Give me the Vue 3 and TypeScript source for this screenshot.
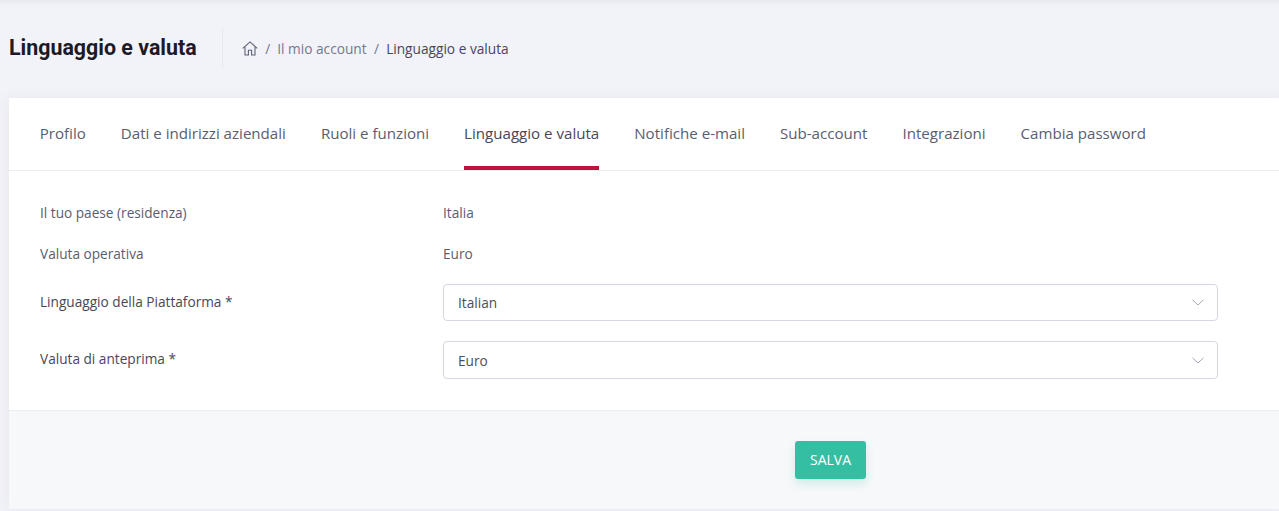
<script setup lang="ts">
const tabs = [
  { label: 'Profilo' },
  { label: 'Dati e indirizzi aziendali' },
  { label: 'Ruoli e funzioni' },
  { label: 'Linguaggio e valuta', active: true },
  { label: 'Notifiche e-mail' },
  { label: 'Sub-account' },
  { label: 'Integrazioni' },
  { label: 'Cambia password' }
]

const infoRows = [
  { label: 'Il tuo paese (residenza)', value: 'Italia' },
  { label: 'Valuta operativa', value: 'Euro' }
]

const selectRows = [
  { label: 'Linguaggio della Piattaforma *', value: 'Italian' },
  { label: 'Valuta di anteprima *', value: 'Euro' }
]
</script>

<template>
  <main class="page">
    <header class="subheader">
      <h1 class="title">Linguaggio e valuta</h1>
      <nav class="crumbs">
        <svg class="home" width="16" height="15" viewBox="0 0 16 15" fill="none" stroke="#5d6275" stroke-width="1.1">
          <path d="M.8 7.4 8 .9l7.2 6.5" />
          <path d="M3 5.8V14h3.4V9.2h3.2V14H13V5.8" />
        </svg>
        <span class="sep">/</span>
        <span class="crumb">Il mio account</span>
        <span class="sep">/</span>
        <span class="crumb current">Linguaggio e valuta</span>
      </nav>
    </header>

    <section class="card">
      <div class="tabs">
        <a v-for="tab in tabs" :key="tab.label" class="tab" :class="{ active: tab.active }">{{ tab.label }}</a>
      </div>

      <div class="form">
        <div v-for="row in infoRows" :key="row.label" class="info-row">
          <span class="info-label">{{ row.label }}</span>
          <span class="info-value">{{ row.value }}</span>
        </div>
        <div class="select-list">
          <div v-for="row in selectRows" :key="row.label" class="select-row">
            <label class="select-label">{{ row.label }}</label>
            <div class="select">
              <span>{{ row.value }}</span>
              <svg width="12" height="7" viewBox="0 0 12 7" fill="none" stroke="#a3a8b8" stroke-width="1">
                <path d="M.5.8 6 6l5.5-5.2" />
              </svg>
            </div>
          </div>
        </div>
      </div>

      <div class="actions">
        <button class="save">SALVA</button>
      </div>
    </section>
  </main>
</template>

<style>
html,
body {
  margin: 0;
  overflow: hidden;
}
</style>

<style scoped>
.page {
  height: 511px;
  box-sizing: border-box;
  background: #f2f3f8;
  padding: 0 0 0 9px;
  font-family: 'Open Sans', sans-serif;
  overflow: hidden;
  box-shadow: inset 0 8px 8px -8px rgba(80, 80, 110, 0.12);
}

.subheader {
  height: 98px;
  box-sizing: border-box;
  padding-bottom: 2px;
  display: flex;
  align-items: center;
}

.title {
  margin: 0;
  font-family: Roboto, sans-serif;
  font-size: 21.4px;
  font-weight: 700;
  color: #1b1b28;
  padding-right: 25px;
  height: 40px;
  line-height: 40px;
  border-right: 1px solid #e7e8ef;
}

.crumbs {
  display: flex;
  align-items: center;
  margin-left: 19px;
  font-size: 13.7px;
  color: #74788d;
}

.home {
  display: block;
}

.sep {
  margin: 0 7px 0 7.5px;
}

.current {
  color: #48465b;
}

.card {
  background: #fff;
  box-shadow: 0 0 13px rgba(82, 63, 105, 0.07);
  height: 411px;
  box-sizing: border-box;
}

.tabs {
  height: 73px;
  box-sizing: border-box;
  display: flex;
  gap: 35px;
  padding-left: 30.7px;
  border-bottom: 1px solid #ebedf2;
}

.tab {
  display: flex;
  align-items: center;
  height: 72px;
  box-sizing: border-box;
  padding-top: 1px;
  border-bottom: 4px solid transparent;
  font-size: 15.1px;
  color: #595d6e;
}

.tab.active {
  color: #48465b;
  border-bottom-color: #c2103d;
}

.form {
  height: 239px;
  box-sizing: border-box;
  padding: 22px 61px 0 31px;
  font-size: 13.65px;
}

.info-row {
  display: flex;
  height: 41px;
  padding-top: 10px;
  box-sizing: border-box;
  line-height: 20px;
}

.info-label,
.select-label {
  flex: 0 0 403px;
}

.info-label,
.info-value {
  color: #595d6e;
}

.select-list {
  display: flex;
  flex-direction: column;
  gap: 20px;
  margin-top: 9px;
}

.select-row {
  display: flex;
}

.select-label {
  line-height: 36.4px;
  color: #48465b;
}

.select {
  flex: 1;
  height: 37.4px;
  box-sizing: border-box;
  border: 1px solid #d5d8e2;
  border-radius: 4px;
  display: flex;
  align-items: center;
  justify-content: space-between;
  padding: 0 13px 0 14px;
  color: #495057;
}

.actions {
  height: 99px;
  background: #f7f8fa;
  border-top: 1px solid #ebedf2;
  box-sizing: border-box;
  display: flex;
  justify-content: center;
  align-items: center;
  padding: 0 61px 0 434px;
}

.save {
  width: 71px;
  height: 38px;
  border: 0;
  border-radius: 3px;
  padding: 0 0 2px;
  background: #34bfa3;
  color: #fff;
  font-family: 'Open Sans', sans-serif;
  font-size: 14px;
  box-shadow: 0 5px 10px rgba(52, 191, 163, 0.2);
}
</style>
